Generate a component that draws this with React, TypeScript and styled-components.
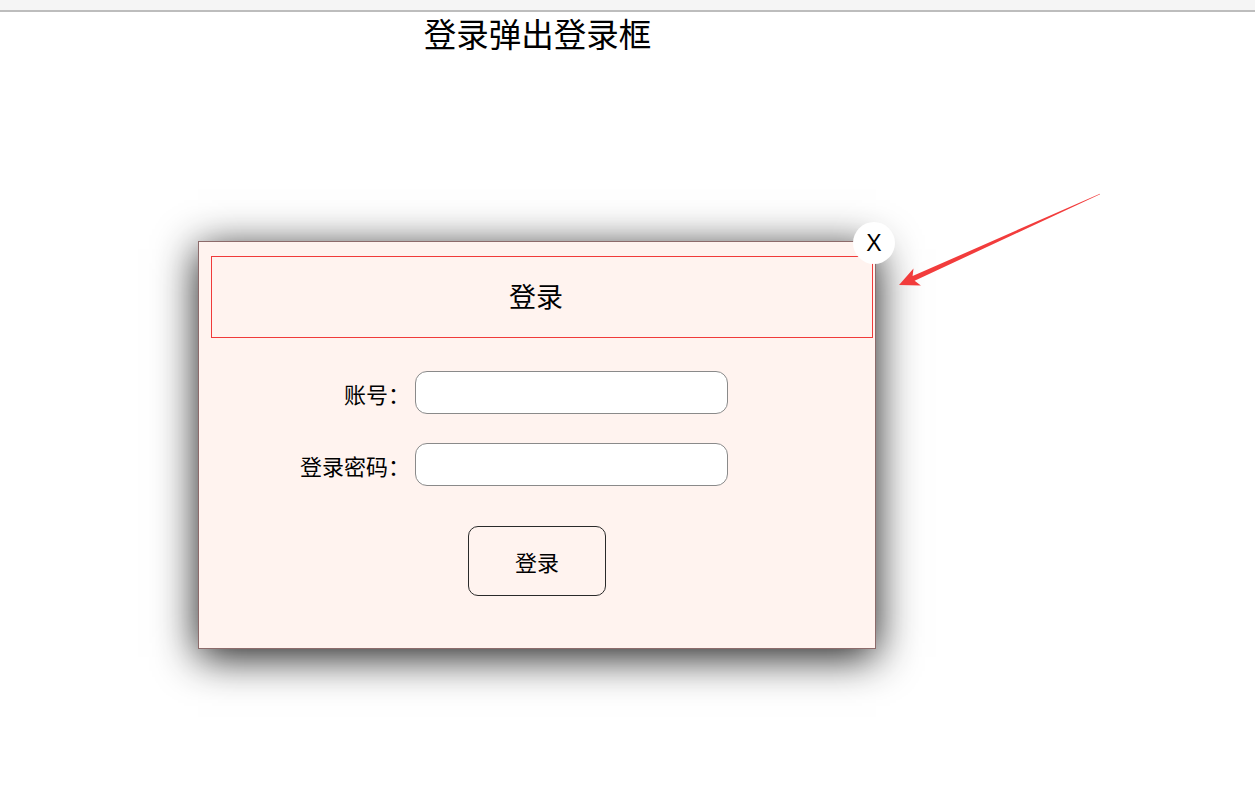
import React from "react";
import styled, { createGlobalStyle } from "styled-components";

const GlobalStyle = createGlobalStyle`
  html, body {
    margin: 0;
    padding: 0;
    background: #ffffff;
    font-family: "Noto Sans CJK SC", "Liberation Sans", sans-serif;
    color: #000;
  }
`;

const Page = styled.div`
  position: relative;
  width: 1255px;
  height: 805px;
  overflow: hidden;
`;

const TopStrip = styled.div`
  height: 10px;
  background: #f5f5f5;
  border-bottom: 2px solid #bdbdbd;
`;

const Stage = styled.div`
  width: 1075px;
  display: flex;
  flex-direction: column;
  align-items: flex-start;
`;

const Title = styled.h1`
  align-self: center;
  margin: -1px 0 0;
  height: 44px;
  line-height: 44px;
  font-size: 32.5px;
  font-weight: 400;
`;

const Modal = styled.div`
  position: relative;
  margin: 186px 0 0 198px;
  width: 678px;
  height: 408px;
  box-sizing: border-box;
  background: #fff3ef;
  border: 1px solid #8d6b6b;
  box-shadow: 0 8px 40px rgba(0, 0, 0, 0.9);
  display: flex;
  flex-direction: column;
  align-items: center;
`;

const CloseButton = styled.button`
  position: absolute;
  top: -20px;
  right: -20px;
  width: 42px;
  height: 42px;
  border-radius: 50%;
  border: none;
  background: #fff;
  font-family: "Liberation Sans", sans-serif;
  font-size: 23px;
  line-height: 42px;
  padding: 0;
  color: #000;
  cursor: pointer;
`;

const Header = styled.div`
  align-self: flex-start;
  margin: 14px 0 0 12px;
  padding: 0 12px 4px 0;
  width: 662px;
  height: 82px;
  box-sizing: border-box;
  border: 1px solid #f03a3a;
  display: flex;
  align-items: center;
  justify-content: center;
  font-size: 27px;
`;

const Form = styled.div`
  align-self: flex-start;
  margin: 33px 0 0 99px;
  display: flex;
  flex-direction: column;
  gap: 29px;
`;

const Row = styled.div`
  display: flex;
  align-items: center;
  gap: 5px;
`;

const Label = styled.label`
  width: 112px;
  text-align: right;
  font-size: 22px;
  white-space: nowrap;
`;

const Input = styled.input`
  width: 313px;
  height: 43px;
  box-sizing: border-box;
  border: 1px solid #8a8a8a;
  border-radius: 12px;
  background: #fff;
  outline: none;
`;

const SubmitButton = styled.button`
  margin-top: 40px;
  width: 138px;
  height: 70px;
  box-sizing: border-box;
  border: 1px solid #2a2a2a;
  border-radius: 10px;
  background: transparent;
  font-family: "Noto Sans CJK SC", sans-serif;
  font-size: 22px;
  color: #000;
  cursor: pointer;
`;

const ArrowLayer = styled.svg`
  position: absolute;
  left: 0;
  top: 0;
  pointer-events: none;
`;

export default function App() {
  return (
    <Page>
      <GlobalStyle />
      <TopStrip />
      <Stage>
        <Title>登录弹出登录框</Title>
        <Modal>
          <CloseButton>X</CloseButton>
          <Header>登录</Header>
          <Form>
            <Row>
              <Label>账号：</Label>
              <Input type="text" />
            </Row>
            <Row>
              <Label>登录密码：</Label>
              <Input type="password" />
            </Row>
          </Form>
          <SubmitButton>登录</SubmitButton>
        </Modal>
      </Stage>
      <ArrowLayer width="1255" height="805" viewBox="0 0 1255 805">
        <polygon
          points="899,285 913.5,268.6 912.6,276.1 1099.9,193.7 1100.1,194.3 914.6,280.7 920.9,285.5"
          fill="#f23c3c"
        />
      </ArrowLayer>
    </Page>
  );
}
